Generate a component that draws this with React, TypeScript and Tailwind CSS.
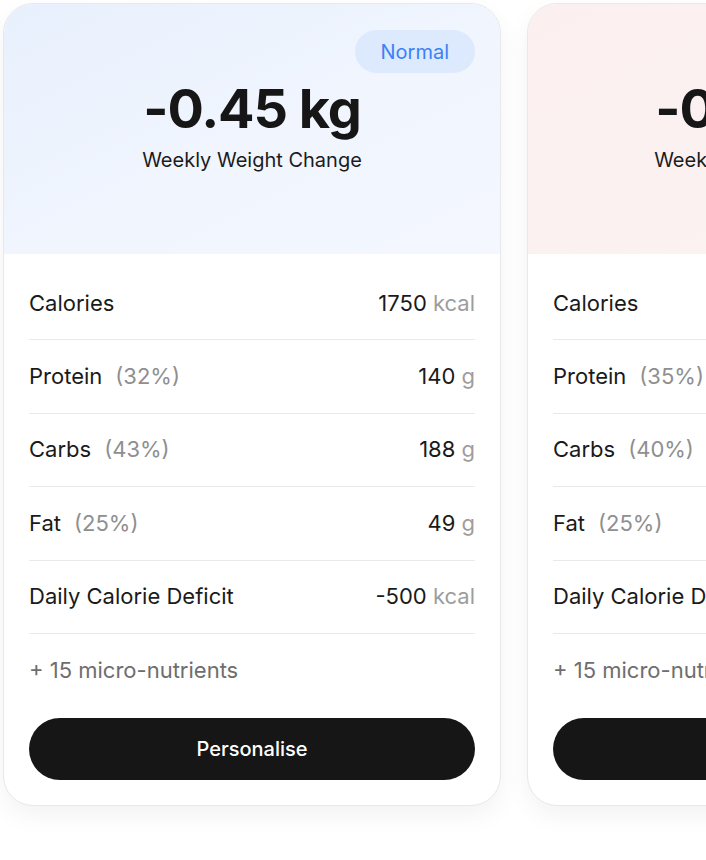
import React from 'react';

type Row = { label: string; pct?: string; value: string; unit: string };

interface PlanCardProps {
  badge: string;
  change: string;
  tone: 'blue' | 'red';
  rows: Row[];
  width: string;
}

function PlanCard({ badge, change, tone, rows, width }: PlanCardProps) {
  const headerBg =
    tone === 'blue'
      ? 'bg-gradient-to-br from-[#e8f0fd] via-[#f0f5fe] to-[#f4f7fe]'
      : 'bg-gradient-to-br from-[#fcefef] via-[#fbf1f1] to-[#fbf3f3]';
  const badgeCls =
    tone === 'blue' ? 'bg-[#dde9fd] text-[#3b82f6]' : 'bg-[#fde3e3] text-[#ef4444]';

  return (
    <div
      className={`${width} shrink-0 rounded-[30px] border border-[#e8e8e8] bg-white overflow-hidden shadow-[0_10px_24px_rgba(0,0,0,0.05)]`}
    >
      {/* Header */}
      <div className={`${headerBg} h-[250px] flex flex-col items-center pt-[26px] relative`}>
        <span
          className={`absolute right-[25px] top-[26px] h-[43px] px-[26px] rounded-full flex items-center text-[20px] ${badgeCls}`}
        >
          {badge}
        </span>
        <div className="mt-[52px] text-[54px] leading-none font-bold tracking-[-0.02em] text-[#161616]">
          {change}
        </div>
        <div className="mt-[14px] text-[20px] leading-none text-[#1c1c1c]">Weekly Weight Change</div>
      </div>

      {/* Body */}
      <div className="px-[25px] pt-[13px] pb-[25px]">
        {rows.map((r) => (
          <div
            key={r.label}
            className="h-[73.4px] flex items-center justify-between border-b border-[#e9e9e9] text-[22px] text-[#1a1a1a]"
          >
            <span>
              {r.label}
              {r.pct && <span className="ml-[13px] text-[#8f8f8f]">{r.pct}</span>}
            </span>
            <span>
              {r.value} <span className="text-[#9d9d9d]">{r.unit}</span>
            </span>
          </div>
        ))}
        <div className="h-[73px] flex items-center text-[22px] text-[#6e6e6e]">+ 15 micro-nutrients</div>
        <button className="mt-[11px] w-full h-[62px] rounded-full bg-[#161616] text-white text-[20px] font-medium">
          Personalise
        </button>
      </div>
    </div>
  );
}

export default function App() {
  return (
    <div
      className="w-[706px] h-[860px] bg-white overflow-hidden flex items-start gap-[26px] pl-[3px] pt-[3px]"
      style={{ fontFamily: 'Inter, "Noto Sans", sans-serif' }}
    >
      <PlanCard
        badge="Normal"
        change="-0.45 kg"
        tone="blue"
        width="w-[498px]"
        rows={[
          { label: 'Calories', value: '1750', unit: 'kcal' },
          { label: 'Protein', pct: '(32%)', value: '140', unit: 'g' },
          { label: 'Carbs', pct: '(43%)', value: '188', unit: 'g' },
          { label: 'Fat', pct: '(25%)', value: '49', unit: 'g' },
          { label: 'Daily Calorie Deficit', value: '-500', unit: 'kcal' },
        ]}
      />
      <PlanCard
        badge="Aggressive"
        change="-0.90 kg"
        tone="red"
        width="w-[474px]"
        rows={[
          { label: 'Calories', value: '1250', unit: 'kcal' },
          { label: 'Protein', pct: '(35%)', value: '109', unit: 'g' },
          { label: 'Carbs', pct: '(40%)', value: '125', unit: 'g' },
          { label: 'Fat', pct: '(25%)', value: '35', unit: 'g' },
          { label: 'Daily Calorie Deficit', value: '-1000', unit: 'kcal' },
        ]}
      />
    </div>
  );
}
